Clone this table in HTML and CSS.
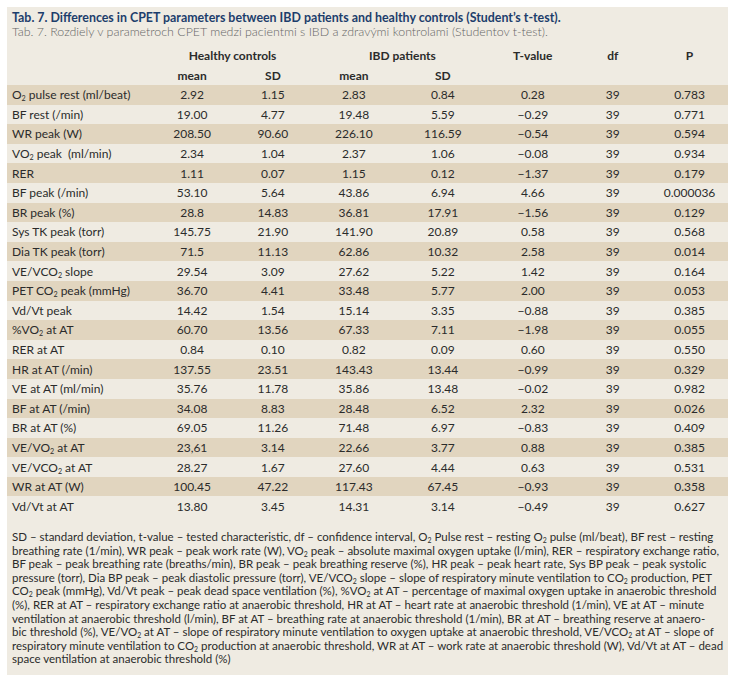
FILE: index.html
```html
<!DOCTYPE html>
<html>
<head>
<meta charset="utf-8">
<link rel="stylesheet" href="styles.css">
</head>
<body>
<div class="panel">
  <div class="title">Tab. 7. Differences in CPET parameters between IBD patients and healthy controls (Student’s t-test).</div>
  <div class="subtitle">Tab. 7. Rozdiely v parametroch CPET medzi pacientmi s IBD a zdravými kontrolami (Studentov t-test).</div>
  <table class="data">
    <colgroup>
      <col class="c-label"><col class="c80"><col class="c80"><col class="c80"><col class="c96"><col class="c82"><col class="c76"><col class="c76">
    </colgroup>
    <thead>
      <tr class="h1"><th></th><th colspan="2">Healthy controls</th><th colspan="2">IBD patients</th><th>T-value</th><th>df</th><th>P</th></tr>
      <tr class="h2"><th></th><th>mean</th><th>SD</th><th>mean</th><th>SD</th><th></th><th></th><th></th></tr>
    </thead>
    <tbody>
      <tr><td>O<sub>2</sub> pulse rest (ml/beat)</td><td>2.92</td><td>1.15</td><td>2.83</td><td>0.84</td><td>0.28</td><td>39</td><td>0.783</td></tr>
      <tr><td>BF rest (/min)</td><td>19.00</td><td>4.77</td><td>19.48</td><td>5.59</td><td>−0.29</td><td>39</td><td>0.771</td></tr>
      <tr><td>WR peak (W)</td><td>208.50</td><td>90.60</td><td>226.10</td><td>116.59</td><td>−0.54</td><td>39</td><td>0.594</td></tr>
      <tr><td>VO<sub>2</sub> peak &nbsp;(ml/min)</td><td>2.34</td><td>1.04</td><td>2.37</td><td>1.06</td><td>−0.08</td><td>39</td><td>0.934</td></tr>
      <tr><td>RER</td><td>1.11</td><td>0.07</td><td>1.15</td><td>0.12</td><td>−1.37</td><td>39</td><td>0.179</td></tr>
      <tr><td>BF peak (/min)</td><td>53.10</td><td>5.64</td><td>43.86</td><td>6.94</td><td>4.66</td><td>39</td><td>0.000036</td></tr>
      <tr><td>BR peak (%)</td><td>28.8</td><td>14.83</td><td>36.81</td><td>17.91</td><td>−1.56</td><td>39</td><td>0.129</td></tr>
      <tr><td>Sys TK peak (torr)</td><td>145.75</td><td>21.90</td><td>141.90</td><td>20.89</td><td>0.58</td><td>39</td><td>0.568</td></tr>
      <tr><td>Dia TK peak (torr)</td><td>71.5</td><td>11.13</td><td>62.86</td><td>10.32</td><td>2.58</td><td>39</td><td>0.014</td></tr>
      <tr><td>VE/VCO<sub>2</sub> slope</td><td>29.54</td><td>3.09</td><td>27.62</td><td>5.22</td><td>1.42</td><td>39</td><td>0.164</td></tr>
      <tr><td>PET CO<sub>2</sub> peak (mmHg)</td><td>36.70</td><td>4.41</td><td>33.48</td><td>5.77</td><td>2.00</td><td>39</td><td>0.053</td></tr>
      <tr><td>Vd/Vt peak</td><td>14.42</td><td>1.54</td><td>15.14</td><td>3.35</td><td>−0.88</td><td>39</td><td>0.385</td></tr>
      <tr><td>%VO<sub>2</sub> at AT</td><td>60.70</td><td>13.56</td><td>67.33</td><td>7.11</td><td>−1.98</td><td>39</td><td>0.055</td></tr>
      <tr><td>RER at AT</td><td>0.84</td><td>0.10</td><td>0.82</td><td>0.09</td><td>0.60</td><td>39</td><td>0.550</td></tr>
      <tr><td>HR at AT (/min)</td><td>137.55</td><td>23.51</td><td>143.43</td><td>13.44</td><td>−0.99</td><td>39</td><td>0.329</td></tr>
      <tr><td>VE at AT (ml/min)</td><td>35.76</td><td>11.78</td><td>35.86</td><td>13.48</td><td>−0.02</td><td>39</td><td>0.982</td></tr>
      <tr><td>BF at AT (/min)</td><td>34.08</td><td>8.83</td><td>28.48</td><td>6.52</td><td>2.32</td><td>39</td><td>0.026</td></tr>
      <tr><td>BR at AT (%)</td><td>69.05</td><td>11.26</td><td>71.48</td><td>6.97</td><td>−0.83</td><td>39</td><td>0.409</td></tr>
      <tr><td>VE/VO<sub>2</sub> at AT</td><td>23,61</td><td>3.14</td><td>22.66</td><td>3.77</td><td>0.88</td><td>39</td><td>0.385</td></tr>
      <tr><td>VE/VCO<sub>2</sub> at AT</td><td>28.27</td><td>1.67</td><td>27.60</td><td>4.44</td><td>0.63</td><td>39</td><td>0.531</td></tr>
      <tr><td>WR at AT (W)</td><td>100.45</td><td>47.22</td><td>117.43</td><td>67.45</td><td>−0.93</td><td>39</td><td>0.358</td></tr>
      <tr><td>Vd/Vt at AT</td><td>13.80</td><td>3.45</td><td>14.31</td><td>3.14</td><td>−0.49</td><td>39</td><td>0.627</td></tr>
    </tbody>
  </table>
  <p class="note">SD – standard deviation, t-value – tested characteristic, df – confidence interval, O<sub>2</sub> Pulse rest – resting O<sub>2</sub> pulse (ml/beat), BF rest – resting<br>breathing rate (1/min), WR peak – peak work rate (W), VO<sub>2</sub> peak – absolute maximal oxygen uptake (l/min), RER – respiratory exchange ratio,<br>BF peak – peak breathing rate (breaths/min), BR peak – peak breathing reserve (%), HR peak – peak heart rate, Sys BP peak – peak systolic<br>pressure (torr), Dia BP peak – peak diastolic pressure (torr), VE/VCO<sub>2</sub> slope – slope of respiratory minute ventilation to CO<sub>2</sub> production, PET<br>CO<sub>2</sub> peak (mmHg), Vd/Vt peak – peak dead space ventilation (%), %VO<sub>2</sub> at AT – percentage of maximal oxygen uptake in anaerobic threshold<br>(%), RER at AT – respiratory exchange ratio at anaerobic threshold, HR at AT – heart rate at anaerobic threshold (1/min), VE at AT – minute<br>ventilation at anaerobic threshold (l/min), BF at AT – breathing rate at anaerobic threshold (1/min), BR at AT – breathing reserve at anaero-<br>bic threshold (%), VE/VO<sub>2</sub> at AT – slope of respiratory minute ventilation to oxygen uptake at anaerobic threshold, VE/VCO<sub>2</sub> at AT – slope of<br>respiratory minute ventilation to CO<sub>2</sub> production at anaerobic threshold, WR at AT – work rate at anaerobic threshold (W), Vd/Vt at AT – dead<br>space ventilation at anaerobic threshold (%)</p>
</div>
</body>
</html>
```
FILE: styles.css
```css
html, body {
  margin: 0;
  padding: 0;
  background: #ffffff;
}
body {
  font-family: Lato, "Open Sans", sans-serif;
  color: #2b2b2b;
}
.panel {
  margin: 7px 4px 7px 7px;
  width: 721px;
  height: 668px;
  box-sizing: border-box;
  background: #efebe2;
  padding-top: 4px;
}
.title {
  padding-left: 5px;
  font-size: 12.4px;
  line-height: 14px;
  font-weight: bold;
  color: #1d3e6c;
  white-space: nowrap;
}
.subtitle {
  padding-left: 5px;
  font-size: 12.4px;
  line-height: 14px;
  color: #666666;
  font-weight: 300;
  white-space: nowrap;
}
.data {
  margin-top: 6px;
  width: 721px;
  border-collapse: collapse;
  table-layout: fixed;
  font-size: 12px;
}
.c-label { width: 143px; }
.c80 { width: 80px; }
.c96 { width: 96px; }
.c82 { width: 82px; }
.c76 { width: 76px; }
.data th {
  font-weight: bold;
  text-align: center;
  height: 20px;
  padding: 0;
  color: #2b2b2b;
}
.data td {
  height: 19.6px;
  padding: 0;
  text-align: center;
  white-space: nowrap;
}
.data td:first-child {
  text-align: left;
  padding-left: 5px;
}
.data tbody tr:nth-child(odd) {
  background: #e1d5bf;
}
sub {
  font-size: 0.6em;
  vertical-align: -0.3em;
  line-height: 0;
}
.note {
  margin: 14px 0 0 0;
  padding-left: 5px;
  font-size: 11.5px;
  line-height: 13.6px;
  white-space: nowrap;
}
```
